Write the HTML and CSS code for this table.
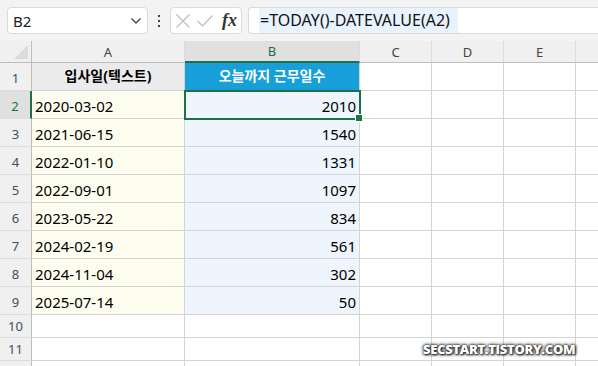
FILE: index.html
```html
<!DOCTYPE html>
<html lang="ko">
<head>
<meta charset="utf-8">
<link rel="stylesheet" href="styles.css">
</head>
<body>
<div class="app">
  <div class="topbar">
    <div class="namebox">
      <span class="ref">B2</span>
      <svg class="chev" width="12" height="8" viewBox="0 0 12 8"><path d="M1.5 1.5 L6 6 L10.5 1.5" fill="none" stroke="#444" stroke-width="1.3"/></svg>
    </div>
    <div class="dots"><i></i><i></i><i></i></div>
    <div class="fxbox">
      <svg width="16" height="16" viewBox="0 0 16 16"><path d="M1.5 1.5 L14.5 14.5 M14.5 1.5 L1.5 14.5" stroke="#bdbdbd" stroke-width="1.2"/></svg>
      <svg width="18" height="16" viewBox="0 0 18 16"><path d="M1.5 8 L6.5 13 L16.5 2.5" fill="none" stroke="#bdbdbd" stroke-width="1.2"/></svg>
      <span class="fx">fx</span>
    </div>
    <div class="formula"><span class="ftext">=TODAY()-DATEVALUE(A2)</span></div>
  </div>
  <div class="sheet">
    <div class="corner"><span class="tri"></span></div>
    <div class="ch">A</div>
    <div class="ch sel">B</div>
    <div class="ch">C</div>
    <div class="ch">D</div>
    <div class="ch">E</div>
    <div class="ch last"></div>

    <div class="rh">1</div>
    <div class="c hdrA">입사일(텍스트)</div>
    <div class="c hdrB">오늘까지 근무일수</div>
    <div class="c"></div><div class="c"></div><div class="c"></div><div class="c last"></div>

    <div class="rh selrow">2</div>
    <div class="c a">2020-03-02</div>
    <div class="c b active">2010<span class="handle"></span></div>
    <div class="c"></div><div class="c"></div><div class="c"></div><div class="c last"></div>

    <div class="rh">3</div>
    <div class="c a">2021-06-15</div>
    <div class="c b">1540</div>
    <div class="c"></div><div class="c"></div><div class="c"></div><div class="c last"></div>

    <div class="rh">4</div>
    <div class="c a">2022-01-10</div>
    <div class="c b">1331</div>
    <div class="c"></div><div class="c"></div><div class="c"></div><div class="c last"></div>

    <div class="rh">5</div>
    <div class="c a">2022-09-01</div>
    <div class="c b">1097</div>
    <div class="c"></div><div class="c"></div><div class="c"></div><div class="c last"></div>

    <div class="rh">6</div>
    <div class="c a">2023-05-22</div>
    <div class="c b">834</div>
    <div class="c"></div><div class="c"></div><div class="c"></div><div class="c last"></div>

    <div class="rh">7</div>
    <div class="c a">2024-02-19</div>
    <div class="c b">561</div>
    <div class="c"></div><div class="c"></div><div class="c"></div><div class="c last"></div>

    <div class="rh">8</div>
    <div class="c a">2024-11-04</div>
    <div class="c b">302</div>
    <div class="c"></div><div class="c"></div><div class="c"></div><div class="c last"></div>

    <div class="rh">9</div>
    <div class="c a">2025-07-14</div>
    <div class="c b">50</div>
    <div class="c"></div><div class="c"></div><div class="c"></div><div class="c last"></div>

    <div class="rh sm">10</div>
    <div class="c e"></div><div class="c e"></div><div class="c e"></div><div class="c e"></div><div class="c e"></div><div class="c e last"></div>

    <div class="rh sm">11</div>
    <div class="c e"></div><div class="c e"></div><div class="c e"></div><div class="c e"></div><div class="c e"></div><div class="c e last"></div>

    <div class="rh sm"></div>
    <div class="c e"></div><div class="c e"></div><div class="c e"></div><div class="c e"></div><div class="c e"></div><div class="c e last"></div>
  </div>
  <div class="watermark">SECSTART.TISTORY.COM</div>
</div>
</body>
</html>
```
FILE: styles.css
```css
* { box-sizing: border-box; }
html, body { margin: 0; padding: 0; }
body {
  width: 598px;
  height: 366px;
  overflow: hidden;
  background: #fff;
  font-family: "Noto Sans", "Noto Sans CJK KR", sans-serif;
  color: #000;
}
.app { position: relative; width: 598px; height: 366px; overflow: hidden; }

.topbar {
  height: 41px;
  background: #f3f3f3;
  display: flex;
  align-items: flex-start;
  padding: 7px 0 0 7px;
}
.namebox {
  width: 141px;
  height: 27px;
  background: #fff;
  border: 1px solid #dadada;
  border-radius: 4px;
  display: flex;
  align-items: center;
  justify-content: space-between;
  padding: 0 5px 0 5px;
}
.ref { font-size: 15px; color: #222; }
.dots {
  width: 22px;
  height: 27px;
  display: flex;
  flex-direction: column;
  align-items: center;
  justify-content: center;
  gap: 3px;
}
.dots i { width: 2px; height: 2px; background: #444; display: block; }
.fxbox {
  width: 72px;
  height: 27px;
  background: #fff;
  border: 1px solid #dadada;
  border-radius: 4px;
  display: flex;
  align-items: center;
  gap: 5px;
  padding: 0 0 0 4px;
}
.fx {
  font-family: "Liberation Serif", "DejaVu Serif", serif;
  font-style: italic;
  font-weight: bold;
  font-size: 18px;
  color: #333;
  margin-left: 3px;
}
.formula {
  margin-left: 6px;
  flex: 1;
  height: 27px;
  background: #fff;
  border: 1px solid #dadada;
  border-right: none;
  border-radius: 4px 0 0 4px;
  display: flex;
  align-items: stretch;
  padding-left: 10px;
}
.ftext {
  background: #e9f3fd;
  font-size: 16px;
  line-height: 25px;
  color: #111;
  padding: 0 8px 0 1px;
}

.sheet {
  display: grid;
  grid-template-columns: 32px 153px 175px 72px 72px 72px 22px;
  grid-template-rows: 22px repeat(9, 28px) 23px 23px 23px;
}
.corner {
  background: #f0f0f0;
  border-right: 1px solid #bdbdbd;
  border-bottom: 1px solid #bdbdbd;
  position: relative;
}
.tri {
  position: absolute;
  right: 3px;
  bottom: 3px;
  width: 0; height: 0;
  border-left: 14px solid transparent;
  border-bottom: 14px solid #dcdcdc;
}
.ch {
  background: #f0f0f0;
  border-right: 1px solid #dcdcdc;
  border-bottom: 1px solid #bdbdbd;
  font-size: 13px;
  color: #444;
  display: flex;
  align-items: center;
  justify-content: center;
}
.ch.sel {
  background: #e0e0e0;
  color: #1e6e42;
  border-bottom: 2px solid #1e7145;
}
.ch.last { border-right: none; }
.rh {
  background: #f0f0f0;
  border-right: 1px solid #bdbdbd;
  border-bottom: 1px solid #dcdcdc;
  font-size: 13px;
  color: #3d4f63;
  display: flex;
  align-items: flex-end;
  justify-content: center;
  padding-bottom: 3px;
}
.rh.sm { padding-bottom: 2px; }
.rh.selrow {
  background: #e0e0e0;
  color: #1e6e42;
  border-right: 2px solid #1e7145;
}
.c {
  border-right: 1px solid #d4d4d4;
  border-bottom: 1px solid #d4d4d4;
  font-size: 15px;
  display: flex;
  align-items: flex-end;
  padding: 0 3px 2px 3px;
  position: relative;
}
.c.last { border-right: none; }
.c.a { background: #fdfdef; }
.c.b { background: #eef5fd; justify-content: flex-end; }
.hdrA {
  background: #ebebeb;
  font-weight: bold;
  justify-content: center;
  font-size: 14px;
  padding-bottom: 5px;
}
.hdrB {
  background: #179fd9;
  color: #fff;
  font-weight: bold;
  justify-content: center;
  font-size: 14px;
  padding-bottom: 5px;
}
.active {
  outline: 2px solid #1e7145;
  outline-offset: -1px;
  z-index: 2;
}
.handle {
  position: absolute;
  right: -4px;
  bottom: -4px;
  width: 6px;
  height: 6px;
  background: #1e7145;
  border: 1px solid #fff;
  box-sizing: content-box;
}

.watermark {
  position: absolute;
  left: 423px;
  top: 340px;
  font-family: "Open Sans", "Noto Sans", sans-serif;
  font-weight: 800;
  font-size: 13px;
  letter-spacing: -0.3px;
  color: #fff;
  text-shadow: 0 0 2px #333, 0 0 3px #333, 1px 1px 2px #222, 0 0 4px #555;
}
```
